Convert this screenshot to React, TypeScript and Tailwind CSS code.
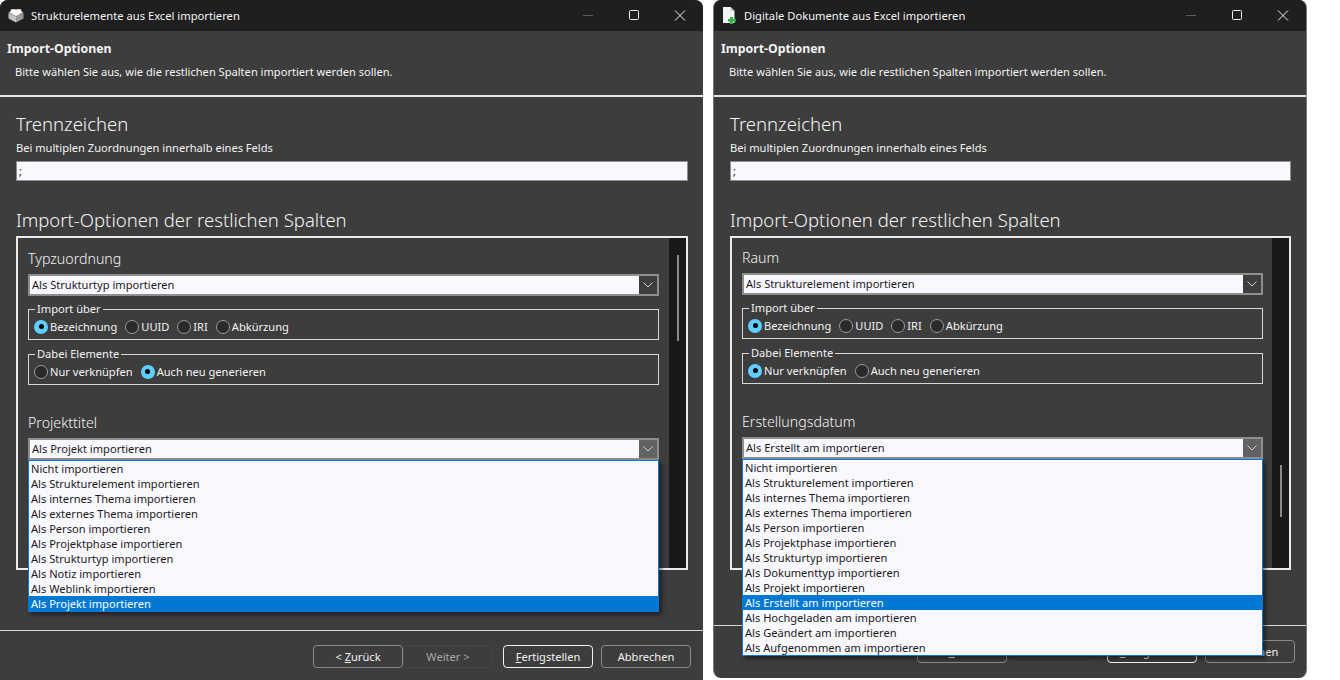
import React from 'react';

const LEFT_OPTIONS = [
    'Nicht importieren',
    'Als Strukturelement importieren',
    'Als internes Thema importieren',
    'Als externes Thema importieren',
    'Als Person importieren',
    'Als Projektphase importieren',
    'Als Strukturtyp importieren',
    'Als Notiz importieren',
    'Als Weblink importieren',
    'Als Projekt importieren',
];

const RIGHT_OPTIONS = [
    'Nicht importieren',
    'Als Strukturelement importieren',
    'Als internes Thema importieren',
    'Als externes Thema importieren',
    'Als Person importieren',
    'Als Projektphase importieren',
    'Als Strukturtyp importieren',
    'Als Dokumenttyp importieren',
    'Als Projekt importieren',
    'Als Erstellt am importieren',
    'Als Hochgeladen am importieren',
    'Als Geändert am importieren',
    'Als Aufgenommen am importieren',
];

const BrickIcon = () => (
    <svg width="16" height="16" viewBox="0 0 16 16">
        <path d="M0.5 6 L8 9.5 V15.5 L0.5 11.5 Z" fill="#c2c2c2" />
        <path d="M15.5 6 L8 9.5 V15.5 L15.5 11.5 Z" fill="#9a9a9a" />
        <path d="M0.5 5.5 L8 2 L15.5 5.5 L8 9.5 Z" fill="#e4e4e4" />
        <ellipse cx="5" cy="4" rx="2.6" ry="2" fill="#fbfbfb" />
        <ellipse cx="11" cy="4" rx="2.6" ry="2" fill="#fbfbfb" />
        <ellipse cx="8" cy="6.4" rx="2.6" ry="1.8" fill="#fbfbfb" />
    </svg>
);

const DocIcon = () => (
    <svg width="15" height="17" viewBox="0 0 15 17">
        <path d="M1 0 H8.5 L12.5 4 V16 H1 Z" fill="#f2f6f4" />
        <path d="M8.5 0 L12.5 4 H8.5 Z" fill="#c2ccc8" />
        <path d="M8 10 H11 V12 H14 V14.5 H11 V17 H8 V14.5 H6 V12 H8 Z" fill="#2fb344" />
    </svg>
);

const WindowControls = () => (
    <div className="flex items-center">
        <svg width="46" height="31" viewBox="0 0 46 31" stroke="#5c5c5c" fill="none">
            <path d="M18 15.5 H28" />
        </svg>
        <svg width="46" height="31" viewBox="0 0 46 31" stroke="#f0f0f0" fill="none">
            <rect x="18.5" y="10.5" width="9" height="9" rx="1" />
        </svg>
        <svg width="46" height="31" viewBox="0 0 46 31" stroke="#f0f0f0" fill="none">
            <path d="M18 10.5 L28 20.5 M28 10.5 L18 20.5" />
        </svg>
    </div>
);

const Radio = ({ label, checked }: { label: string; checked?: boolean }) => (
    <div className="flex items-center gap-[2px]">
        {checked ? (
            <span className="w-[14px] h-[14px] rounded-full bg-[#60cdff] flex items-center justify-center">
                <span className="w-[5px] h-[5px] rounded-full bg-black" />
            </span>
        ) : (
            <span className="w-[14px] h-[14px] rounded-full bg-[#2a2a2a] border border-[#9a9a9a]" />
        )}
        <span>{label}</span>
    </div>
);

const GroupBox = ({ legend, children }: { legend: string; children: React.ReactNode }) => (
    <fieldset className="border border-[#d8d8d8] h-[38px] pl-[5px] pr-2 flex items-center">
        <legend className="ml-[1px] px-[2px] leading-[14px]">{legend}</legend>
        <div className="flex items-center gap-[8px] -mt-[1px]">{children}</div>
    </fieldset>
);

const ComboBox = ({ value, open }: { value: string; open?: boolean }) => (
    <div className="h-[22px] flex border-2 border-[#8e8e8e] bg-[#faf8ff]">
        <div className="flex-1 pl-[2px] text-[#1a1a1a] leading-[18px]">{value}</div>
        <div className={`w-[18px] flex items-center justify-center ${open ? 'bg-[#626262]' : 'bg-[#3d3d3d]'}`}>
            <svg width="10" height="6" viewBox="0 0 10 6" fill="none" stroke="#cfcfcf">
                <path d="M0.5 0.5 L5 5 L9.5 0.5" />
            </svg>
        </div>
    </div>
);

const ButtonBox = ({ children, tone }: { children: React.ReactNode; tone: 'normal' | 'off' | 'main' }) => {
    const toneClass =
        tone === 'main'
            ? 'border-[#f2f2f2] text-[#f2f2f2]'
            : tone === 'off'
              ? 'border-[#464646] text-[#a8a8a8]'
              : 'border-[#8a8a8a] text-[#f2f2f2]';
    return (
        <div className={`w-[90px] h-[23px] pt-[1px] rounded-[4px] border flex items-center justify-center ${toneClass}`}>
            {children}
        </div>
    );
};

type SectionProps = { title: string; select: string; importChecked: string; linkChecked: string };

const Section = ({ title, select, importChecked, linkChecked }: SectionProps) => (
    <div>
        <div className="text-[14.2px] font-light leading-[20px] h-[20px]">{title}</div>
        <div className="mt-[5px]">
            <ComboBox value={select} />
        </div>
        <div className="mt-[6px]">
            <GroupBox legend="Import über">
                {['Bezeichnung', 'UUID', 'IRI', 'Abkürzung'].map((r) => (
                    <Radio key={r} label={r} checked={r === importChecked} />
                ))}
            </GroupBox>
        </div>
        <div className="mt-[7px]">
            <GroupBox legend="Dabei Elemente">
                {['Nur verknüpfen', 'Auch neu generieren'].map((r) => (
                    <Radio key={r} label={r} checked={r === linkChecked} />
                ))}
            </GroupBox>
        </div>
    </div>
);

type DialogProps = {
    title: string;
    icon: React.ReactNode;
    className: string;
    first: SectionProps;
    secondTitle: string;
    secondSelect: string;
    options: string[];
    selected: string;
    innerClass: string;
    thumbClass: string;
    listClass: string;
    footerClass: string;
};

const Dialog = ({ title, icon, className, first, secondTitle, secondSelect, options, selected, innerClass, thumbClass, listClass, footerClass }: DialogProps) => (
    <div className={`relative flex flex-col bg-[#3d3d3d] text-[#f3f3f3] text-[11.1px] overflow-hidden shrink-0 ${className}`}>
        <div className="h-[31px] shrink-0 bg-[#1f1f1f] flex items-center justify-between pl-[8px]">
            <div className="flex items-center gap-[7px] text-[11.2px]">
                {icon}
                <span className="pt-[1px]">{title}</span>
            </div>
            <WindowControls />
        </div>
        <div className="h-[64px] shrink-0 pl-[7px] pt-[10px]">
            <div className="font-bold text-[12.3px] leading-[16px]">Import-Optionen</div>
            <div className="pl-[8px] mt-[7px] leading-[16px]">Bitte wählen Sie aus, wie die restlichen Spalten importiert werden sollen.</div>
        </div>
        <div className="h-[2px] shrink-0 bg-[#e6e6e6]" />
        <div className="pl-[16px] pr-[15px] flex-1 min-h-0 flex flex-col">
            <div className="text-[18.5px] font-light leading-[24px] mt-[15px]">Trennzeichen</div>
            <div className="leading-[16px] mt-[4px]">Bei multiplen Zuordnungen innerhalb eines Felds</div>
            <div className="mt-[5px] h-[20px] border border-[#8e8e8e] bg-[#faf8ff] text-[#1a1a1a] pl-[2px] leading-[18px]">;</div>
            <div className="text-[18.5px] font-light leading-[24px] mt-[27px]">Import-Optionen der restlichen Spalten</div>
            <div className="mt-[4px] h-[334px] shrink-0 border-2 border-[#ececec] flex overflow-hidden">
                <div className={`flex-1 pl-[10px] ${innerClass}`}>
                    <Section {...first} />
                    <div className="text-[14.2px] font-light leading-[20px] mt-[28px]">{secondTitle}</div>
                    <div className="mt-[5px]">
                        <ComboBox value={secondSelect} open />
                    </div>
                </div>
                <div className="w-[17px] bg-[#191919] relative">
                    <div className={`absolute left-[8px] w-[2px] bg-[#8a8a8a] ${thumbClass}`} />
                </div>
            </div>
        </div>
        <div className={`shrink-0 border-t border-[#d8d8d8] flex justify-end items-start pt-[14px] ${footerClass}`}>
            <ButtonBox tone="normal">
                <span>&lt; <u>Z</u>urück</span>
            </ButtonBox>
            <ButtonBox tone="off">Weiter &gt;</ButtonBox>
            <div className="ml-[10px]">
                <ButtonBox tone="main">
                    <span><u>F</u>ertigstellen</span>
                </ButtonBox>
            </div>
            <div className="ml-[8px]">
                <ButtonBox tone="normal">Abbrechen</ButtonBox>
            </div>
        </div>
        <div className={`absolute border border-[#0078d4] bg-[#faf8ff] text-[#1a1a1a] shadow-[3px_3px_4px_rgba(0,0,0,0.45)] ${listClass}`}>
            {options.map((o) => (
                <div key={o} className={`h-[15px] leading-[15px] pl-[2px] ${o === selected ? 'bg-[#0078d4] text-white' : ''}`}>
                    {o}
                </div>
            ))}
        </div>
    </div>
);

export default function App() {
    return (
        <div className="h-[680px] w-[1340px] bg-white flex items-start overflow-hidden" style={{ fontFamily: '"Noto Sans", sans-serif' }}>
            <Dialog
                className="w-[703px] h-[680px] rounded-t-[8px]"
                title="Strukturelemente aus Excel importieren"
                icon={<BrickIcon />}
                first={{ title: 'Typzuordnung', select: 'Als Strukturtyp importieren', importChecked: 'Bezeichnung', linkChecked: 'Auch neu generieren' }}
                secondTitle="Projekttitel"
                secondSelect="Als Projekt importieren"
                options={LEFT_OPTIONS}
                selected="Als Projekt importieren"
                innerClass="pt-[11px] pr-[10px]"
                thumbClass="top-[17px] h-[86px]"
                listClass="left-[28px] right-[44px] top-[460px]"
                footerClass="h-[50px] pr-[12px]"
            />
            <div className="w-[10px] shrink-0" />
            <Dialog
                className="w-[594px] h-[678px] rounded-[8px] border-x border-[#7a7a7a]"
                title="Digitale Dokumente aus Excel importieren"
                icon={<DocIcon />}
                first={{ title: 'Raum', select: 'Als Strukturelement importieren', importChecked: 'Bezeichnung', linkChecked: 'Nur verknüpfen' }}
                secondTitle="Erstellungsdatum"
                secondSelect="Als Erstellt am importieren"
                options={RIGHT_OPTIONS}
                selected="Als Erstellt am importieren"
                innerClass="pt-[10px] pr-[9px]"
                thumbClass="top-[227px] h-[52px]"
                listClass="left-[28px] right-[43px] top-[459px]"
                footerClass="h-[53px] pr-[11px]"
            />
        </div>
    );
}
